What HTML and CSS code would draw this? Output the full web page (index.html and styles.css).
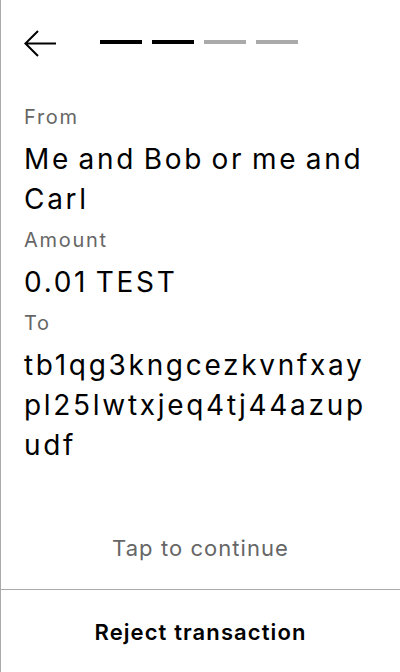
FILE: index.html
```html
<!DOCTYPE html>
<html>
<head>
<meta charset="utf-8">
<link rel="stylesheet" href="styles.css">
</head>
<body>
<div class="screen">
  <header class="header">
    <svg class="back" width="32" height="28" viewBox="0 0 32 28" fill="none" stroke="#000" stroke-width="2">
      <path d="M14 1 L1.4 13.5 L14 26 M1.4 13.5 H32"/>
    </svg>
    <div class="steps">
      <span class="step done"></span>
      <span class="step done"></span>
      <span class="step"></span>
      <span class="step"></span>
    </div>
  </header>
  <main class="content">
    <div class="label first">From</div>
    <div class="value">Me and Bob or me and Carl</div>
    <div class="label">Amount</div>
    <div class="value">0.01 TEST</div>
    <div class="label">To</div>
    <div class="value addr">tb1qg3kngcezkvnfxaypl25lwtxjeq4tj44azupudf</div>
  </main>
  <div class="tap">Tap to continue</div>
  <footer class="footer">Reject transaction</footer>
</div>
</body>
</html>
```
FILE: styles.css
```css
html, body {
  margin: 0;
  padding: 0;
  background: #fff;
}
body {
  font-family: Inter, "Noto Sans", sans-serif;
  color: #000;
}
.screen {
  box-sizing: border-box;
  width: 400px;
  height: 672px;
  border-left: 1px solid #aaa;
  display: flex;
  flex-direction: column;
}
.header {
  height: 86px;
  display: flex;
  align-items: center;
  padding: 0 23px;
  gap: 44px;
}
.back {
  display: block;
  margin-top: 1px;
}
.steps {
  display: flex;
  gap: 10px;
  margin-top: -2px;
}
.step {
  width: 42px;
  height: 4px;
  background: #aaa;
}
.step.done {
  background: #000;
}
.content {
  padding: 17px 23px 0;
}
.label {
  font-size: 20px;
  line-height: 28px;
  letter-spacing: 1.7px;
  color: #666;
  margin-top: 7px;
}
.label.first {
  margin-top: 0;
}
.value {
  font-size: 28px;
  line-height: 40px;
  letter-spacing: 2.7px;
  word-spacing: -3px;
  margin-top: 8px;
}
.addr {
  word-break: break-all;
}
.tap {
  flex: 1;
  display: flex;
  align-items: flex-end;
  justify-content: center;
  font-size: 22px;
  line-height: 28px;
  letter-spacing: 1.05px;
  color: #666;
  padding-bottom: 27px;
}
.footer {
  height: 83px;
  border-top: 1px solid #aaa;
  display: flex;
  align-items: center;
  justify-content: center;
  font-size: 22px;
  font-weight: 600;
  letter-spacing: 1.1px;
  padding-top: 2px;
  box-sizing: border-box;
}
```
